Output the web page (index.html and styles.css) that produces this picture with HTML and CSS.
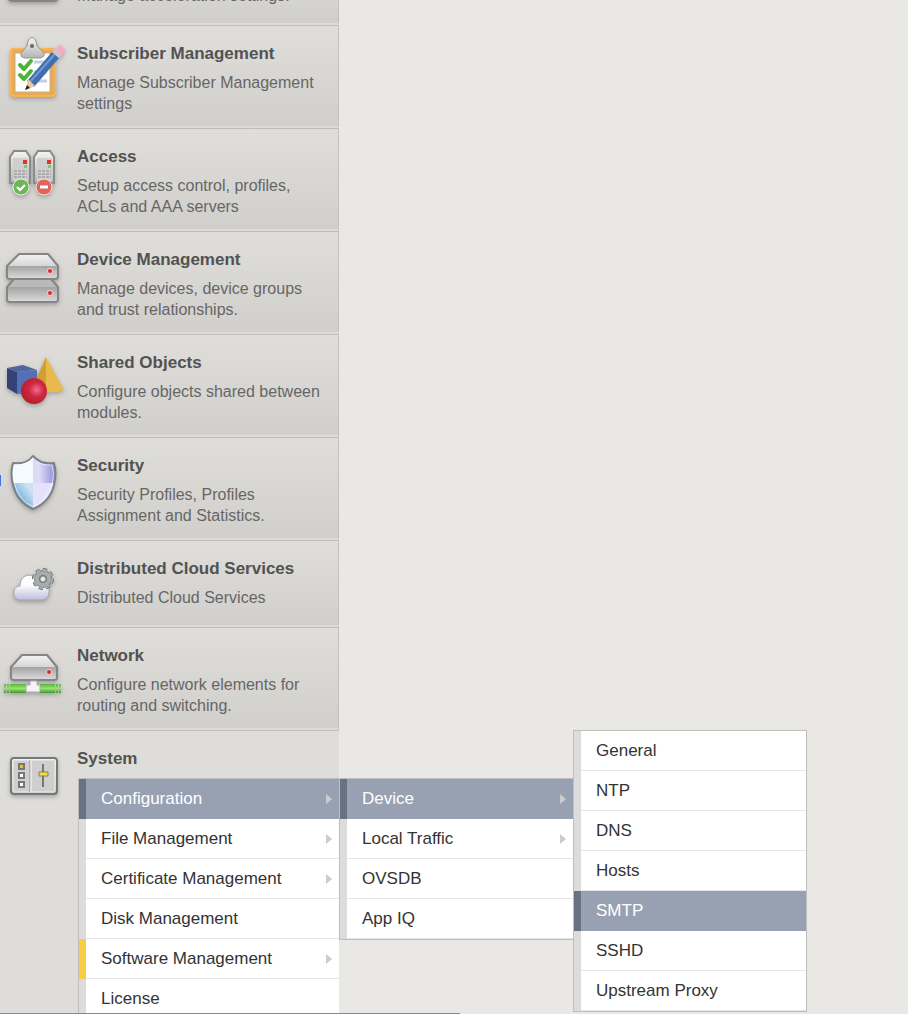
FILE: index.html
```html
<!DOCTYPE html>
<html lang="en">
<head>
  <meta charset="UTF-8" />
  <meta name="viewport" content="width=device-width, initial-scale=1" />
  <title>System Configuration</title>
  <link rel="stylesheet" href="styles.css">
</head>
<body>

  <!-- shared gradients -->
  <svg class="defs" width="0" height="0" aria-hidden="true">
    <defs>
      <linearGradient id="metal" x1="0" y1="0" x2="0" y2="1">
        <stop offset="0" stop-color="#f4f4f4" />
        <stop offset="1" stop-color="#b4b4b4" />
      </linearGradient>
      <linearGradient id="front" x1="0" y1="0" x2="0" y2="1">
        <stop offset="0" stop-color="#a2a2a2" />
        <stop offset="1" stop-color="#d8d8d8" />
      </linearGradient>
      <linearGradient id="green" x1="0" y1="0" x2="0" y2="1">
        <stop offset="0" stop-color="#55b53a" />
        <stop offset="0.5" stop-color="#9be276" />
        <stop offset="1" stop-color="#3d982c" />
      </linearGradient>
      <linearGradient id="cloud" x1="0" y1="0" x2="0" y2="1">
        <stop offset="0.4" stop-color="#fdfdff" />
        <stop offset="1" stop-color="#bdbddd" />
      </linearGradient>
      <linearGradient id="shield-blue" x1="1" y1="0" x2="0" y2="1">
        <stop offset="0.2" stop-color="#c9e3f4" />
        <stop offset="1" stop-color="#3f8bc8" />
      </linearGradient>
      <linearGradient id="shield-purple" x1="0" y1="0" x2="1" y2="0">
        <stop offset="0.3" stop-color="#dcdaf7" />
        <stop offset="1" stop-color="#918bd8" />
      </linearGradient>
      <radialGradient id="ball" cx="0.6" cy="0.45" r="0.55">
        <stop offset="0" stop-color="#ef6d94" />
        <stop offset="0.5" stop-color="#cf2a40" />
        <stop offset="1" stop-color="#b8202d" />
      </radialGradient>
    </defs>
  </svg>

  <nav class="sidebar">
    <a class="item" href="#acceleration">
      <svg class="icon" viewBox="0 0 77 72">
        <rect x="8" y="14" width="50" height="41" rx="4" fill="url(#front)" stroke="#858585" stroke-width="2" />
      </svg>
      <div class="text">
        <h3>Acceleration</h3>
        <p>Manage acceleration settings.</p>
      </div>
    </a>

    <a class="item" href="#subscriber">
      <svg class="icon" viewBox="0 0 77 72">
        <rect x="10" y="15" width="46" height="49" rx="4" fill="#efa94b" />
        <rect x="11" y="16" width="44" height="47" rx="3" fill="none" stroke="#f6bf72" />
        <path d="M15 20h35v39H15z" fill="#fff" stroke="#bcae98" />
        <path d="M34 29h13M34 39h13M31 48h16" stroke="#c5cde4" stroke-width="3" />
        <path d="M21 23v-3l6-7c1-11 9-11 10 0l7 7v3l-3 2H24z" fill="url(#metal)" stroke="#969696" />
        <circle cx="32" cy="13" r="2" fill="#666" />
        <path d="M20 32l4 4 7-8M20 42l4 4 7-8" fill="none" stroke="#4cb535" stroke-width="4" stroke-linecap="round" stroke-linejoin="round" />
        <path d="M52 19l7 6-25 29-7-6z" fill="#416fae" />
        <path d="M55 21l-26 29" stroke="#6f9ad0" stroke-width="2" />
        <path d="M28 46l7 7-9 4z" fill="#edc99b" />
        <path d="M27 52l3 3-5 2z" fill="#222" />
        <path d="M52 19l4-4 7 6-4 4z" fill="#c9c9ce" />
        <path d="M57 16l3-3 4 4-3 4z" fill="#f3adc4" stroke="#f3adc4" stroke-width="2" stroke-linejoin="round" />
      </svg>
      <div class="text">
        <h3>Subscriber Management</h3>
        <p>Manage Subscriber Management settings</p>
      </div>
    </a>

    <a class="item" href="#access">
      <svg class="icon" viewBox="0 0 77 72">
        <g id="tower">
          <path d="M10 47V21l4-6h12l4 6v26z" fill="url(#metal)" stroke="#8b8b8b" stroke-width="2" />
          <path d="M13 22h15v23H13z" fill="#cfcfcf" />
          <path d="M14 35h13M14 38h13M14 41h13" stroke="#888" stroke-dasharray="3 1" />
          <path d="M23 24h4v4h-4z" fill="#e0302f" />
          <path d="M24 29h3v3h-3z" fill="#6bdc4b" />
        </g>
        <use href="#tower" x="24" />
        <circle cx="21" cy="51" r="8" fill="#6cb858" stroke="#e4efe0" />
        <path d="M17 51l3 3 5-5" fill="none" stroke="#fff" stroke-width="2" />
        <circle cx="44" cy="51" r="8" fill="#e0665a" stroke="#f3dedb" />
        <path d="M40 51h8" stroke="#fff" stroke-width="3" />
      </svg>
      <div class="text">
        <h3>Access</h3>
        <p>Setup access control, profiles, ACLs and AAA servers</p>
      </div>
    </a>

    <a class="item" href="#devices">
      <svg class="icon" viewBox="0 0 77 72">
        <g stroke="#858585" stroke-width="2" stroke-linejoin="round">
          <path d="M14 40h37l7 8v12q0 3-3 3H10q-3 0-3-3V48z" fill="#b9b9b9" />
          <path d="M8 48h49v12q0 2-2 2H10q-2 0-2-2z" fill="url(#front)" stroke="none" />
          <path d="M19 15h29l10 12v10q0 3-3 3H10q-3 0-3-3V27z" fill="url(#metal)" />
        </g>
        <path d="M8 27h49v10q0 2-2 2H10q-2 0-2-2z" fill="url(#front)" />
        <circle cx="50" cy="32" r="3" fill="#ecc9c9" />
        <circle cx="50" cy="32" r="2" fill="#e3262b" />
        <circle cx="50" cy="54" r="3" fill="#ecc9c9" />
        <circle cx="50" cy="54" r="2" fill="#e3262b" />
      </svg>
      <div class="text">
        <h3>Device Management</h3>
        <p>Manage devices, device groups and trust relationships.</p>
      </div>
    </a>

    <a class="item" href="#objects">
      <svg class="icon" viewBox="0 0 77 72">
        <path d="M7 26l10 4v22L7 46z" fill="#344374" />
        <path d="M7 26l16-3 14 5-20 2z" fill="#4d67a0" />
        <path d="M17 30l20-2v22l-20 2z" fill="#5470b5" />
        <path d="M46 15L33 44q5 6 13 6z" fill="#d09e39" />
        <path d="M46 15l18 33q-9 3-18 2z" fill="#e9b94b" />
        <circle cx="34" cy="49" r="13" fill="url(#ball)" />
      </svg>
      <div class="text">
        <h3>Shared Objects</h3>
        <p>Configure objects shared between modules.</p>
      </div>
    </a>

    <a class="item" href="#security">
      <svg class="icon" viewBox="0 0 77 72">
        <path d="M33 11q-7 9-20 7-3 10 0 22 4 17 20 24z" fill="#f5faff" />
        <path d="M33 11q8 9 21 7 3 10 0 22-4 17-21 24z" fill="#e6e2fa" />
        <path d="M33 38H13q4 19 20 26z" fill="url(#shield-blue)" />
        <path d="M33 11q8 9 21 7 2 11 1 20H33z" fill="url(#shield-purple)" />
        <path d="M33 11q-7 9-20 7-3 10 0 22 4 17 20 24 17-7 21-24 3-12 0-22-13 2-21-7z" fill="none" stroke="#7c8088" stroke-width="2" stroke-linejoin="round" />
        <path d="M33 13q-7 8-18 7-3 9 0 20 4 15 18 22 15-7 19-22 3-11 0-20-12 1-19-7z" fill="none" stroke="#fff" stroke-opacity="0.6" />
      </svg>
      <div class="text">
        <h3>Security</h3>
        <p>Security Profiles, Profiles Assignment and Statistics.</p>
      </div>
      <span class="marker"></span>
    </a>

    <a class="item" href="#cloud">
      <svg class="icon" viewBox="0 0 77 72">
        <path d="M19 52q-6-1-5-9 1-5 6-5 0-9 8-11 7 0 10 7l6 2q6 2 5 9-1 6-6 7z" fill="url(#cloud)" stroke="#a5a5ac" />
        <circle cx="43" cy="31" r="9" fill="none" stroke="#6f7776" stroke-width="4" stroke-dasharray="4 3" />
        <circle cx="43" cy="31" r="6" fill="none" stroke="#6f7776" stroke-width="6" />
        <circle cx="43" cy="31" r="9" fill="none" stroke="#a5b0ae" stroke-width="2" stroke-dasharray="4 3" />
        <circle cx="43" cy="31" r="6" fill="none" stroke="#a5b0ae" stroke-width="4" />
        <circle cx="43" cy="31" r="2" fill="#eee" />
      </svg>
      <div class="text">
        <h3>Distributed Cloud Services</h3>
        <p>Distributed Cloud Services</p>
      </div>
    </a>

    <a class="item" href="#network">
      <svg class="icon" viewBox="0 0 77 72">
        <path d="M22 20h25l10 12v10q0 3-3 3H14q-3 0-3-3V32z" fill="url(#metal)" stroke="#858585" stroke-width="2" stroke-linejoin="round" />
        <path d="M12 32h44v10q0 2-2 2H14q-2 0-2-2z" fill="url(#front)" />
        <circle cx="49" cy="37" r="3" fill="#ecc9c9" />
        <circle cx="49" cy="37" r="2" fill="#e3262b" />
        <path d="M4 49h2v9H4zM7 49h2v9H7zM10 49h16v9H10zM40 49h15v9H40zM56 49h2v9h-2zM59 49h2v9h-2z" fill="url(#green)" />
        <path d="M30 46h7v4h3v7H26v-7h4z" fill="#f4f4f4" stroke="#aaa" />
      </svg>
      <div class="text">
        <h3>Network</h3>
        <p>Configure network elements for routing and switching.</p>
      </div>
    </a>

    <div class="item open">
      <svg class="icon" viewBox="0 0 77 72">
        <rect x="11" y="20" width="46" height="36" rx="3" fill="url(#metal)" stroke="#777" stroke-width="2" />
        <rect x="13" y="22" width="42" height="32" rx="1" fill="#cfcfcf" stroke="#efefef" />
        <path d="M30 22v32" stroke="#8f8f8f" />
        <path d="M31 22v32" stroke="#fff" />
        <g fill="#fff" stroke="#777" stroke-width="2">
          <path d="M19 26h5v5h-5z" fill="#f0c02e" />
          <path d="M19 35h5v5h-5z" />
          <path d="M19 44h5v5h-5z" />
        </g>
        <path d="M43 26v23" stroke="#777" stroke-width="2" />
        <path d="M39 34h9v4h-9z" fill="#f2df3c" stroke="#85805a" />
      </svg>
      <div class="text">
        <h3>System</h3>
        <ul class="menu main-menu">
          <li class="active">
            <a class="more" href="#configuration">Configuration</a>
            <ul class="menu submenu">
              <li class="active">
                <a class="more" href="#device">Device</a>
                <ul class="menu submenu raised">
                  <li><a href="#general">General</a></li>
                  <li><a href="#ntp">NTP</a></li>
                  <li><a href="#dns">DNS</a></li>
                  <li><a href="#hosts">Hosts</a></li>
                  <li class="active"><a href="#smtp">SMTP</a></li>
                  <li><a href="#sshd">SSHD</a></li>
                  <li><a href="#proxy">Upstream Proxy</a></li>
                </ul>
              </li>
              <li><a class="more" href="#local-traffic">Local Traffic</a></li>
              <li><a href="#ovsdb">OVSDB</a></li>
              <li><a href="#app-iq">App IQ</a></li>
            </ul>
          </li>
          <li><a class="more" href="#files">File Management</a></li>
          <li><a class="more" href="#certificates">Certificate Management</a></li>
          <li><a href="#disks">Disk Management</a></li>
          <li class="current"><a class="more" href="#software">Software Management</a></li>
          <li><a href="#license">License</a></li>
        </ul>
      </div>
    </div>
  </nav>

  <div class="status-line"></div>

</body>
</html>
```
FILE: styles.css
```css
* {
  box-sizing: border-box;
}

body {
  margin: 0;
  height: 100vh;
  overflow: hidden;
  background-color: #e9e8e4;
  font-family: "Liberation Sans", Arial, sans-serif;
}

.defs {
  position: absolute;
}

.sidebar {
  width: 339px;
  /* scrolled part way down the list */
  margin-top: -62px;
}

.item {
  position: relative;
  display: grid;
  grid-template-columns: 77px 1fr;
  min-height: 87px;
  border-top: 1px solid #bdbcb9;
  border-right: 1px solid #c3c2be;
  border-bottom: 2px solid #dddcd8;
  background: linear-gradient(#dfdeda, #d0cfcb);
  color: #666;
  text-decoration: none;
}

.item.open {
  background: #deddd9;
  border-right: none;
  border-bottom: none;
}

.icon {
  width: 77px;
  height: 72px;
  margin-top: 7px;
  filter: drop-shadow(0 2px 2px rgba(0, 0, 0, 0.25));
}

.text {
  padding: 17px 0 12px;
}

h3 {
  margin: 0;
  font-size: 17px;
  line-height: 21px;
  color: #525252;
}

p {
  margin: 8px 12px 0 0;
  font-size: 16px;
  line-height: 21px;
}

.marker {
  position: absolute;
  left: 0;
  top: 37px;
  width: 1px;
  height: 11px;
  background-color: #3b78e7;
}

.menu {
  list-style: none;
  margin: 0;
  padding: 0;
  border: 1px solid #bebebe;
  border-right: none;
  background-color: #fff;
  font-size: 17px;
}

.main-menu {
  margin: 9px 0 0 1px;
}

.menu li {
  position: relative;
}

.menu a {
  display: flex;
  justify-content: space-between;
  align-items: center;
  height: 40px;
  padding: 0 7px 0 15px;
  border-left: 7px solid #dcdcdc;
  box-shadow: inset 0 -1px #e6e6e6;
  color: #333;
  text-decoration: none;
}

.menu .current > a {
  border-left-color: #fbcb43;
}

.menu .active > a {
  border-left-color: #687280;
  background-color: #98a1b2;
  box-shadow: none;
  color: #fff;
}

.more::after {
  content: "";
  border: 5px solid transparent;
  border-left: 6px solid #ccc;
  border-right: none;
}

.submenu {
  position: absolute;
  left: 100%;
  top: -1px;
  width: 234px;
}

.submenu.raised {
  top: -49px;
  border-right: 1px solid #bebebe;
}

.status-line {
  position: fixed;
  left: 0;
  bottom: 0;
  width: 460px;
  height: 1px;
  background-color: #e8605a;
}
```
